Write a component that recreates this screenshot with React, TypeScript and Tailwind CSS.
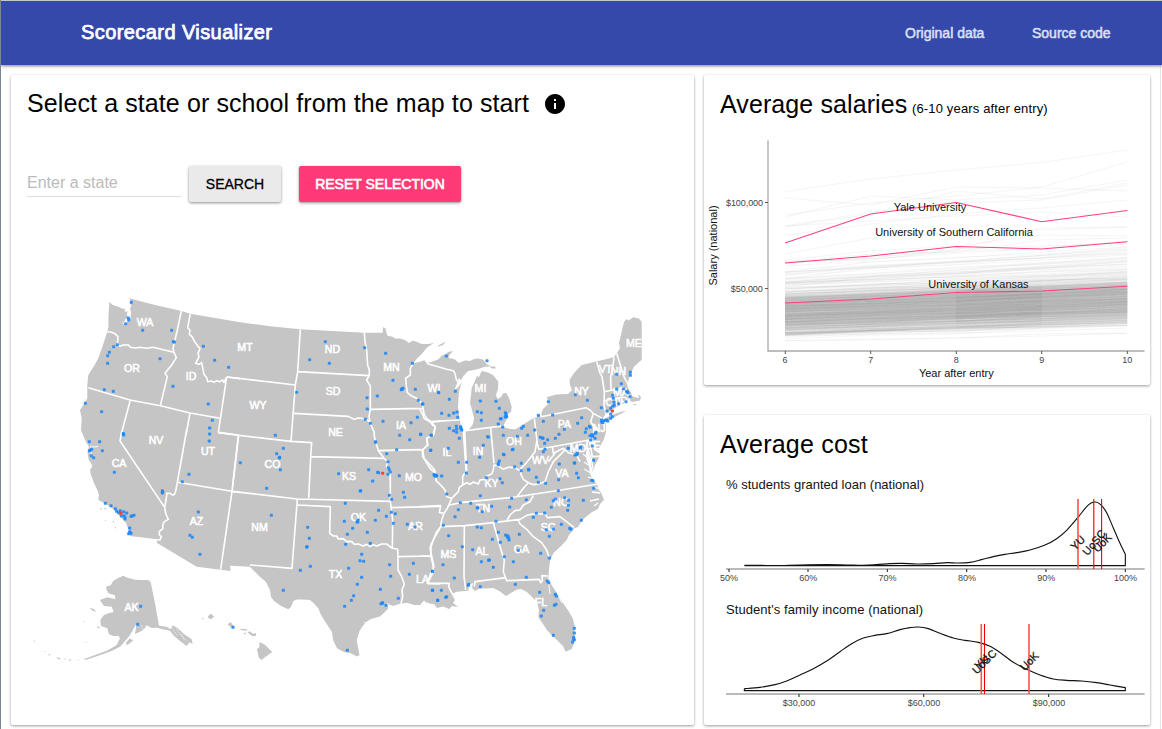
import React from "react";

type Tile = { x: number; y: number; borders: string; dots: string; red?: string };

// Map geometry is stored per tile at three times the drawing scale.
const tiles: Tile[] = [
  {
    x: 20,
    y: 285,
    borders:
      "M262,140L275,142 285,146 294,155 292,178 300,184 310,180 325,180 332,187 345,189 360,187 380,190 400,187 430,194 462,202M484,78L472,135 459,190 462,202 469,218 455,240 435,265 442,275 437,295 421,362M511,86L503,128 510,136 508,148 516,155 525,172 535,185 540,190 534,205 537,215 527,235 537,238 545,233 552,268 560,278 563,290 575,288 582,292 590,287 598,290 608,285 612,292 620,276M620,276L660,281M620,276L595,442M205,308L330,345 421,362 510,384 601,400M331,345L303,450M510,384L498,450",
    dots: "334,52;325,99;326,105;317,116;368,136;455,136;460,170;463,171;292,179;281,185;268,202;263,212;263,235;420,221;550,184;584,226;626,247;459,304;565,357;253,314;280,319;196,355;245,380;577,406;569,429;569,447;310,446",
  },
  {
    x: 20,
    y: 430,
    borders:
      "M305,5L300,33 434,232M500,0L472,157 466,188 460,196 450,190 441,190 438,210 434,232 437,250 445,268 433,275 428,285 429,295 418,305 418,315 424,320 420,330 410,330M472,157L636,184 660,187M595,7L655,15 636,184 602,418",
    dots: "310,11;311,15;208,35;239,35;208,62;211,61;215,58;247,62;214,77;221,83;283,127;568,33;507,133;487,155;427,182;427,189;428,186;256,220;273,227;286,236;290,244;301,242;311,245;320,249;296,248;304,258;312,257;315,262;315,267;333,259;336,258;342,256;329,294;329,305;326,311;333,310;330,308;535,246;510,316;517,322;540,373",
    red: "303,250",
  },
  { x: 20, y: 560, borders: "", dots: "362,139;353,193;639,202" },
  {
    x: 230,
    y: 300,
    borders:
      "M-9,231L196,255M-35,398L24,406 183,424 245,428 242,470 462,475M26,405L8,560M211,88L203,215 196,255 183,424M203,215L418,227M192,340L355,349 372,358 385,354 395,355 412,360 421,370M403,98L405,125 410,150 413,195 418,210 418,227 410,240 421,258 421,328 417,350 421,370 432,395 434,415 440,435 445,452 462,475 474,485 469,498 480,515 481,540M421,328L579,325M549,192L541,205 541,225 527,235 529,258 532,278 545,288 560,295 578,312 579,325 583,345 590,355 606,368 616,380 610,405 590,415 594,435 577,450 578,470 600,505 615,518 618,540M445,452L570,449 577,450M602,366L630,364M242,470L236,595",
    dots: "286,125;239,179;298,190;404,143;467,160;547,190;489,241;515,268;519,265;517,266;514,269;556,268;200,277;411,293;442,288;565,301;578,312;412,327;406,358;421,370;459,364;562,352;543,368;509,406;539,419;572,403;604,406;437,425;436,427;500,449;470,461;602,451;136,406;160,445;140,461;148,474;149,472;151,509;31,488;326,521;416,509;443,517;446,518;474,485;475,503;478,509;481,516;474,523;508,527;615,525;617,527;620,527;626,278",
    red: "458,520",
  },
  {
    x: 230,
    y: 470,
    borders:
      "M6,64L202,87 481,94M481,0L481,94 488,150 487,235M202,87L186,295 60,285M202,105L301,110 299,190 310,198 320,198 325,207 340,206 350,215 365,214 372,223 385,222 400,228 410,223 420,230 430,224 440,228 455,222 470,222 487,235 503,238 504,260 605,258M481,113L630,109M504,260L504,300 515,320 523,342 516,360 518,380 513,400M630,175L618,195 605,220 600,235 605,258 612,290 602,310 592,340 630,342",
    dots: "428,33;391,63;392,62;110,55;124,136;346,100;520,67;524,82;478,76;485,88;446,121;469,139;484,127;496,131;490,160;532,163;555,171;343,154;381,155;384,150;383,156;436,151;368,175;352,193;412,187;347,223;421,220;233,172;238,205;230,231;231,230;395,253;390,272;401,274;241,289;211,301;356,295;479,284;482,319;395,322;382,343;451,358;371,377;364,391;344,409;453,401;458,398;456,400;468,406;505,385;160,361;352,541;550,280;538,313;607,304;608,361;623,391",
  },
  {
    x: 420,
    y: 310,
    borders:
      "M15,150L25,162 60,172 80,178 100,182 105,190 108,205 112,215M30,335L118,330M130,363L212,352 250,348M212,352L222,460M130,363L138,480M0,299L9,315 12,325 20,330 30,335 38,345 46,350 40,375 20,385 22,405 8,420M343,325L352,400 356,418 508,390M345,322L360,308 364,320 498,293M498,293L510,300 520,310 512,335 528,360 508,385M350,395L345,425 330,445 318,460 300,478M520,310L547,325M530,155L540,190 546,200 553,245 552,285 560,320M582,142L578,175 572,200 573,240M553,245L590,238 612,232M553,272L605,262M596,262L602,285M590,130L612,200 625,225M397,410L400,430 430,415 445,428 470,435 480,455M508,390L517,440 545,438M405,430L385,455",
    dots: "79,138;201,152;56,247;106,244;88,268;65,310;87,316;101,309;111,306;113,322;88,355;109,349;110,357;101,362;122,350;124,357;122,353;125,360;110,367;118,385;181,273;172,305;184,308;184,331;228,274;238,295;256,308;258,318;258,312;260,320;256,321;241,326;244,326;235,342;248,351;85,415;32,421;33,376;2,373;8,282;203,380;205,381;190,406;179,442;115,457;140,457;250,376;292,379;323,376;277,419;279,418;250,433;252,434;238,453;235,460;235,464;284,470;304,460;326,478;305,355;310,349;344,360;355,316;370,334;398,315;385,275;466,254;502,271;544,293;361,382;367,384;369,385;383,389;406,385;417,373;433,358;374,400;375,418;370,425;473,340;485,323;496,367;499,356;508,349;511,352;510,378;518,374;518,379;526,370;528,367;525,385;514,375;512,390;517,408;545,330;548,338;545,336;550,333;556,331;563,333;560,330;572,325;577,320;572,312;572,295;578,288;583,286;561,303;578,256;580,265;582,277;596,281;590,237;611,236;622,246;620,244;624,248;604,221;590,193;631,187;631,196;618,275;630,260;445,415;465,435;472,430;470,434;482,411;481,414;463,459;418,462;521,451",
    red: "577,303",
  },
  {
    x: 420,
    y: 450,
    borders:
      "M22,400L88,400 86,410 93,425 100,435M0,170L62,167 58,188 72,190M0,318L34,318M95,145L82,175 72,190 65,210 62,230 50,245 40,270 33,290 33,320 40,350 38,370 22,400M8,0L12,25 35,50 44,60 48,75 48,92 62,105 75,120 80,140 95,145M134,-57L140,60 128,80 128,105 118,112 115,125 95,145M128,105L140,98 150,103 160,96 175,102 180,90 195,88 200,78 215,72 220,60 222,45 235,48 250,58 265,52 285,52 295,60 305,62 302,72 310,88 325,98M325,98L310,115 290,142M88,165L115,160 120,158 270,143 410,122 530,103M340,137L330,155 310,165 300,180 285,182 270,195 262,210M65,230L135,227 220,218 300,208 320,196 340,192 375,192 383,203 420,200 462,232M295,210L300,222 320,238 340,260 365,278 380,300 388,325M133,228L132,380 137,420M220,218L243,300 253,330 250,365 260,392 358,388 362,398 367,392 366,377 383,378M163,410L165,395 258,383M325,98L340,104 355,102 375,95 380,80 385,65 400,35 425,10 435,0",
    dots: "139,69;65,78;42,74;44,76;48,76;47,79;80,132;121,158;115,179;105,200;70,226;86,257;152,160;181,137;199,83;240,86;247,98;275,145;319,149;269,171;215,169;187,185;172,174;174,173;228,214;172,231;184,233;235,247;217,268;241,277;257,255;264,258;262,261;266,264;267,270;298,253;295,301;280,335;253,320;206,331;208,330;184,335;158,299;127,290;220,352;69,344;103,384;37,364;37,421;64,421;77,442;80,440;53,451;145,406;146,403;181,410;286,403;319,382;382,393;386,398;359,427;362,310;388,324;406,433;409,438;403,466;408,463;371,481;364,498;400,556;463,535;463,549;461,562;463,569;461,568;458,576;388,259;424,223;449,235;453,238;401,238;379,239;340,202;349,190;374,189;394,172;400,152;406,147;434,143;446,151;445,166;443,181;490,151;484,211;521,115;515,91;519,92;475,83;470,70;464,39;416,89;377,100;349,82;355,97;304,62;326,60;415,122",
  },
];

const labels: [string, number, number][] = [
  ["WA", 145, 322], ["OR", 132, 368], ["ID", 191, 376], ["MT", 245, 347], ["WY", 258, 405],
  ["ND", 332.5, 349], ["SD", 333, 391], ["NE", 335.5, 432], ["KS", 349, 476], ["MN", 391.5, 367],
  ["IA", 401, 425], ["WI", 434, 388], ["MI", 480.5, 388], ["IL", 447, 452.5], ["IN", 478, 451],
  ["OH", 514, 441], ["PA", 564.5, 424], ["NY", 581.5, 391], ["VT", 605.5, 369], ["NH", 618.5, 371.5],
  ["ME", 634, 343], ["MA", 621, 392], ["CT", 612.5, 402.5], ["RI", 625.5, 401], ["NJ", 599, 428],
  ["DE", 593, 445], ["MD", 578, 448.5], ["VA", 562, 473], ["WV", 540.5, 460], ["KY", 491.5, 483],
  ["TN", 483, 508], ["NC", 561, 502], ["SC", 548, 527], ["GA", 521.5, 549], ["AL", 482, 551],
  ["MS", 448.5, 554], ["LA", 422.5, 579], ["AR", 415.5, 526], ["MO", 413.5, 477], ["OK", 358.5, 517],
  ["TX", 335.5, 574], ["NM", 259.5, 527], ["AZ", 196.5, 521], ["UT", 208, 451], ["CO", 272.5, 464],
  ["NV", 156, 440], ["CA", 119, 463], ["FL", 541, 602], ["AK", 131.5, 607],
];

const mainland =
  "M109.3,301.7L112,304.5 115,305.7 119,307 122,308.5 125.3,309 124.5,312 127.5,311 127,315 128,317 125,319.5 124,323 121,322 125,325 128,321 130.5,318 131,312 130,309 131.5,305 129.5,304 130.5,301 129.3,298.3 155,305 181.3,311 190.3,313.7 240,322.3 270,326.2 300.3,329.3 364.3,332.7 382.7,332.7 383,327.3 385.3,328 386.5,333 387.7,336 392,336.5 395,338.5 400,338.5 405,340 409,343 413,340.5 417,342 421.7,344 428,344 434,343 427,347.5 421.7,354 417,358.5 413.3,363.3 420,361.7 425,360 427,363 431,362 438,359.5 442,355.5 446,354 448,352 453,351 449.5,355 448.5,358 454,359 459,363 465,360.5 470,361 474,359 478,358.5 483,359.5 487,364.5 491,366 484,367 478,369 472,370.5 468,371 463.5,376 461,380 459,378 456,386 454.5,389.5 457.5,388 462,382.5 459.3,390 458.5,398 458,407 459.3,418 461,426 463.3,431 467,431 470,428.3 473,424 474,418 472,410 470,403 471,395 471.7,388 474,383 477,376 479,377 481.7,371 488,372.5 493,375 498.3,381.7 498,389 496,395 497.5,399 501,397 503,393.5 506,392.7 509,398 511.7,406.7 511,412 508,414 507.3,418.3 502.7,426.7 508,428.5 515,429.5 524,424 533.3,418.3 541,414 543,409 549,403 546.7,397.3 556,394.5 568,394 572,390 570,385 569.5,380 574,373 581.7,365 590,363 614,357.3 616.7,353.3 620,348.3 619,343 621.7,331.7 624,322 626.5,319 628.5,320.5 633.3,317.3 639,318.5 641.7,322 641.7,360 639,362 636,365 634,366.5 632,371 629.3,376.7 627.3,385 628,388 631,392.5 632,396 636,397.5 639,398 638,394 641,397 640,400.5 632,402 628,399.5 625,403 620,405 611.7,410 605,415 602,419 602,424 606,423 606,431.7 604,439 601.7,443.3 598,450 594,444 592.5,437 592,446 594,450 600,454 598.3,459 594.5,466 593.5,475 591.5,467 591.5,461 589,455 587,447 586,453 586.5,460 589,466 590,474 592.5,479 597,484 598.5,489 601.7,494 604,500 600,504 598,509 592,512 587,516 581.7,520.7 578,527 574.3,528.3 569,535 566.7,540 561,546 553.3,553.3 550,561 549.3,567 548.3,576.7 551,584 556.7,593 563,603 568.5,611 573,619 574.8,627 574.5,636 573.8,644 571.7,649 565.7,651.7 563,646 557,640 552,635.5 547,630 543,624 538.3,617 539,610 537,602 532,597 526.7,591.7 521,589 517,589.5 506,596 500,591.5 493.3,588 486,588.5 480,588.3 475,591 472,588 473,583 469,584.5 468.3,590.7 456.7,591.7 451.7,594 455,600 453,603 458.3,607 452,606 449,609 443.3,606.5 437,608 434,604 426.7,603.3 424,600.5 420,605 414,605 408,603 401.7,603.3 393,606 388,604 388,609 380,616.5 371,619 366,622 362,627 359.5,631 356.7,640 358.3,649 359.5,655 357,656.5 350,653 344,652 337,648.3 333,640 332,632 326,623 321,615 318.3,608.3 314,603.5 310,600 302,599.5 297,599.5 293.3,601 291,607 288.3,609.3 281,606 274,601 271,597 270,590 266,582 259,576 250,566.7 230,565.7 230.7,571 196.7,566.7 156.7,542.7 157.3,539.3 130,536 129,531 126,523 120,516 113,509 106,504 98.3,500 99,495 97.3,490 94,483 91,475 90,470 92.5,466 88.5,459 87.5,453 89,447 85.5,441 81,430 81.7,418.3 80,410 84,404 87.3,398.3 87.3,385 88.3,375 94,366 98.3,358.3 103,345 107.3,331.7 108.5,327 108.3,320Z";

const alaska =
  "M258,80L272,76 280,62 295,54 310,47 322,53 345,59 365,60 385,60 392,66 405,130 417,197 440,200 452,208 458,196 475,206 492,222 515,238 518,252 508,247 500,258 480,243 462,228 450,212 425,207 412,203 395,204 380,196 372,208 360,215 345,222 350,190 340,208 330,225 318,240 300,260 275,273 250,282 215,294 195,300 192,297 240,280 265,270 290,255 300,235 296,228 280,228 266,222 262,205 243,198 241,180 252,165 270,158 281,157 275,140 252,138 245,128 240,120 262,112 286,118 285,106 265,100 260,90Z";

const islands =
  "M208,143L222,147 228,155 218,152ZM230,199L240,201 235,206ZM318,248L328,236 340,240 330,250 320,256ZM40,241l6,2 -1,4zM72,273l5,1 -2,2zM84,282l8,2 -4,3zM108,291l14,4 -4,4zM130,296l6,0 0,4zM145,298l10,1 -4,4zM172,299l6,1 -3,2zM190,184l4,0 -2,4zM197,245l4,1 -3,3zM545,176l7,-3 -3,6zM564,168L574,161 582,170 573,178 565,174ZM623,193L632,186 638,195 645,202 634,203ZM660,206L682,208 680,212 662,210ZM670,218L678,218 676,224ZM682,217L690,214 698,221 707,219 709,227 697,229ZM718,246L735,254 748,268 757,276 740,288 724,300 716,292 711,268 718,262Z";

const coastSpecks =
  "M240,235l6,3M252,236l7,1M255,270l3,2M278,273l5,5M285,290l3,5";

const dot = (s: string) =>
  s.split(";").map((p) => {
    const [cx, cy] = p.split(",").map(Number);
    return <rect key={p} x={cx - 4.6} y={cy - 4.6} width="9.2" height="9.2" rx="2.6" />;
  });

function UsMap() {
  return (
    <svg className="block h-[400px] w-[631px] [font-family:'Liberation_Sans',sans-serif]" viewBox="11 285 631 400">
      <path d={mainland} fill="#c5c5c5" />
      <path d="M602,421L610,415.5 622,411.5 626,411 612,418.5 602,423ZM438,345.5L446,341.5 443,345 438.5,346.5ZM489,366.5l6,0 1,2 -4,0ZM633,404l4,0 -2,1.5Z" fill="#c5c5c5" />
      <g transform="translate(20 560) scale(.33333)" fill="#c5c5c5">
        <path d={alaska} />
        <path d={islands} />
        <path d="M455,203l18,25M470,208l22,30M484,222l15,22M365,196l4,12M376,198l6,6" stroke="#fff" strokeWidth="2" strokeDasharray="5 3" />
      </g>
      <g transform="translate(20 430) scale(.33333)" fill="none">
        <path d={coastSpecks} stroke="#c9c9c9" strokeWidth="3" />
        <path d="M211,48l4,10 -2,14 5,8M215,50l9,1 10,-2" stroke="#fff" strokeWidth="3" />
      </g>
      <g fill="none" stroke="#fff" strokeWidth="1.3">
        <path d="M586,443L588,449 590,455 592,461 593,469 594,477M583,454L588,458M584,462L590,466M584,469L591,473M588,477L595,479M594,487L600,489M592,492L600,493M590,501L599,499M594,506L598,503" />
        <path d="M471,586L470,591M548,577L549,586 550,594M559,597L562,603M364,622L368,626M387,603L389,608M427,602L431,607" strokeWidth="1" />
      </g>
      {tiles.map((t) => (
        <path key={`${t.x}-${t.y}`} transform={`translate(${t.x} ${t.y}) scale(.33333)`} d={t.borders} fill="none" stroke="#fff" strokeWidth="4.8" strokeLinejoin="round" />
      ))}
      <g fill="#fff" fontSize="10.6" textAnchor="middle" stroke="#fff" strokeWidth=".55">
        {labels.map(([name, x, y]) => (
          <text key={name} x={x} y={y + 3.8}>{name}</text>
        ))}
      </g>
      {tiles.map((t) => (
        <g key={`${t.x}-${t.y}`} transform={`translate(${t.x} ${t.y}) scale(.33333)`}>
          <g fill="#1e88f5" fillOpacity=".88">{dot(t.dots)}</g>
          {t.red && <g fill="#f44336">{dot(t.red)}</g>}
        </g>
      ))}
    </svg>
  );
}

function seeded(seed: number) {
  let s = seed;
  return () => {
    s = (s * 1664525 + 1013904223) % 4294967296;
    return s / 4294967296;
  };
}

const years = [785, 870.7, 956.3, 1041.7, 1127.3];

function schoolLines() {
  const rnd = seeded(42);
  const out: string[] = [];
  for (let i = 0; i < 900; i++) {
    const g = (rnd() + rnd() + rnd() + rnd() - 2) * 1.35;
    const tail = rnd() < 0.22 ? rnd() * rnd() * 44 : 0;
    const base = Math.min(314 + g * 14 - tail, 333 + rnd() * 3);
    const rise = 8 + rnd() * 9 + tail * 0.25;
    out.push(
      years
        .map((x, k) => `${x},${(base - (rise * k) / 4 + (rnd() - 0.5) * 3 * (k ? 1 : 0)).toFixed(1)}`)
        .join(" "),
    );
  }
  return out;
}

const outliers = [
  [191.5, 179, 170, 162.5, 150], [198, 205, 187, 188, 191], [215, 203, 196, 187, 162],
  [217, 196, 200, 195, 180], [226, 212, 203, 200, 185], [227, 214, 191, 199, 183],
  [235, 224, 214, 208, 200], [226, 221, 216, 212, 217], [254, 238, 232, 230, 227],
  [260, 251, 246, 235, 236], [262, 254, 252, 240, 238], [263, 258, 249, 246, 243],
  [261, 260, 250, 228, 227], [272, 262, 258, 252, 247], [275, 266, 262, 258, 251],
  [279, 268, 265, 260, 255], [282, 276, 270, 263, 258], [287, 277, 274, 266, 261],
  [340.5, 339, 338, 336, 333], [341, 340, 338, 334, 333.5], [339, 335, 334, 328, 326],
  [337, 334, 333, 331, 328], [334, 331, 332, 325.5, 322], [333, 330.5, 331, 325, 323],
];

const salaryRows = schoolLines();

const highlights: [string, number, number, number[]][] = [
  ["Yale University", 930, 211, [243, 214, 202.5, 221.7, 210.5]],
  ["University of Southern California", 954, 236, [263, 256, 246.5, 249, 241.8]],
  ["University of Kansas", 978.5, 288, [303, 299, 292.5, 291, 286.3]],
];

const toPoints = (ys: number[]) => ys.map((y, k) => `${years[k]},${y}`).join(" ");

function SalaryChart() {
  return (
    <svg className="block h-[252px] w-[446px] [font-family:'Liberation_Sans',sans-serif]" viewBox="704 130 446 252">
      <g fill="none" stroke="#aaa" strokeOpacity=".07" strokeWidth="1">
        {salaryRows.map((p, i) => <polyline key={i} points={p} />)}
      </g>
      <g fill="none" stroke="#777" strokeOpacity=".07" strokeWidth="1">
        {outliers.map((p, i) => <polyline key={i} points={toPoints(p)} />)}
      </g>
      <path d="M768,140.5V351H1144.5" fill="none" stroke="#a8a8a8" strokeWidth="1.3" />
      <path d="M765,202.5h3M765,288.5h3M785.3,351v3M870.7,351v3M956.3,351v3M1041.7,351v3M1127.3,351v3" stroke="#555" />
      <g fill="none" stroke="#ff4081" strokeWidth="1.1">
        {highlights.map(([n, , , ys]) => (
          <polyline key={n} points={toPoints(ys)} />
        ))}
      </g>
      <g fontSize="11" fill="#111" textAnchor="middle">
        {highlights.map(([n, x, y]) => <text key={n} x={x} y={y}>{n}</text>)}
        <text x="956.3" y="377">Year after entry</text>
        <text transform="translate(717 245.5) rotate(-90)">Salary (national)</text>
      </g>
      <g fontSize="9" fill="#444" textAnchor="middle">
        <text x="744.5" y="206" textLength="37">$100,000</text>
        <text x="746.8" y="292" textLength="32">$50,000</text>
        {years.map((x, i) => <text key={x} x={x} y="363">{i + 6}</text>)}
      </g>
    </svg>
  );
}

function smooth(raw: string) {
  const p = raw.split(" ").map((q) => q.split(",").map(Number));
  let d = `M${p[0]}`;
  for (let i = 0; i < p.length - 1; i++) {
    const a = p[Math.max(i - 1, 0)], b = p[i], c = p[i + 1], e = p[Math.min(i + 2, p.length - 1)];
    d += `C${b[0] + (c[0] - a[0]) / 6},${b[1] + (c[1] - a[1]) / 6} ${c[0] - (e[0] - b[0]) / 6},${c[1] - (e[1] - b[1]) / 6} ${c[0]},${c[1]}`;
  }
  return d;
}

const loanCurve = smooth("133,466 180,466 230,467 300,465 380,464 440,465 490,466 530,464 570,461 605,460 650,462 700,461 740,458 775,459 810,457 845,449 880,440 915,433 950,428 990,420 1035,405 1070,386 1100,361 1134,322 1158,292 1172,280 1187,276 1202,284 1220,308 1240,354 1260,400 1276,433");
const incomeCurve = smooth("133,836 180,832 225,824 260,813 300,795 340,776 385,750 420,725 455,701 490,684 525,676 560,671 600,659 630,653 655,651 685,656 720,670 760,684 795,691 835,697 870,709 905,731 940,757 985,780 1020,795 1060,807 1100,811 1145,813 1190,818 1230,825 1276,833");

function CostCharts() {
  return (
    <svg className="block h-[240px] w-[446px] [font-family:'Liberation_Sans',sans-serif]" viewBox="704 475 446 240">
      <text x="726" y="489" fontSize="13" textLength="198" fill="#111">% students granted loan (national)</text>
      <text x="726" y="614" fontSize="13" textLength="197" fill="#111">Student's family income (national)</text>
      <g transform="translate(700 410) scale(.33333)" fill="none" stroke="#111" strokeWidth="3.4">
        <path d={`${loanCurve}V467H133`} strokeLinejoin="round" />
        <path d={`${incomeCurve}V842H133V836`} strokeLinejoin="round" />
        <path d="M78,477H1334M78,852H1334" stroke="#777" />
        <path d="M87,477v9M324,477v9M562,477v9M800,477v9M1038,477v9M1276,477v9M297,852v9M671,852v9M1046,852v9" stroke="#333" />
      </g>
      <g stroke="#f33">
        <path d="M1078,499V569M981.3,624V694M1029,624V694" stroke="#ff5050" strokeWidth="1.6" />
        <path d="M1093.8,499V569M1101.6,499V569M984.5,624V694" stroke="#f00000" strokeWidth="1.1" />
      </g>
      <g fontSize="9" fill="#444" textAnchor="middle">
        {["50%", "60%", "70%", "80%", "90%", "100%"].map((t, i) => (
          <text key={t} x={729 + i * 79.3} y="581">{t}</text>
        ))}
        <text x="799" y="706">$30,000</text>
        <text x="924" y="706">$60,000</text>
        <text x="1049" y="706">$90,000</text>
      </g>
      <g fontSize="11" fill="#111" stroke="#111" strokeWidth=".25" textAnchor="middle">
        <text transform="translate(1080.5 545.5) rotate(-45)">YU</text>
        <text transform="translate(1097 545) rotate(-50)">UoSC</text>
        <text transform="translate(1105 545.5) rotate(-45)">UoK</text>
        <text transform="translate(984.5 664.5) rotate(-45)">YU</text>
        <text transform="translate(987 664.5) rotate(-45)">UoSC</text>
        <text transform="translate(1032 664) rotate(-45)">UoK</text>
      </g>
    </svg>
  );
}

export default function App() {
  return (
    <div className="flex h-[729px] w-[1162px] flex-col overflow-hidden border-l border-[#7c8694] bg-white text-black [font-family:'Liberation_Sans',Arial,sans-serif]">
      <header className="relative flex h-[65px] shrink-0 items-center justify-between border-t border-[#c3c6cf] bg-[#3549ab] pr-[51px] pl-20 shadow-[0_1px_3px_rgba(0,0,0,0.5)]">
        <h1 className="pb-0.5 text-[20px] font-normal tracking-[0.42px] text-white [-webkit-text-stroke:0.75px_white]">Scorecard Visualizer</h1>
        <nav className="flex gap-12 text-[14px] text-[#dde0f2] [-webkit-text-stroke:0.5px_#dde0f2]">
          <a className="w-[79px] whitespace-nowrap">Original data</a>
          <a className="w-[79px] whitespace-nowrap">Source code</a>
        </nav>
      </header>
      <main className="mr-px flex grow gap-[10px] border-r border-[#e4e4e4] pt-[10px] pl-[10px]">
        <section className="flex h-[650px] w-[683px] flex-col rounded-[2px] bg-white shadow-[0_1px_3px_rgba(0,0,0,0.4)]">
          <div className="flex h-14 items-center pl-4">
            <h2 className="w-[516px] text-[25px] leading-8 tracking-[0.1px] whitespace-nowrap">Select a state or school from the map to start</h2>
            <svg className="mt-0.5 size-[24px]" viewBox="0 0 24 24">
              <path d="M12 2C6.48 2 2 6.48 2 12s4.48 10 10 10 10-4.48 10-10S17.52 2 12 2zm1 15h-2v-6h2v6zm0-8h-2V7h2v2z" />
            </svg>
          </div>
          <div className="mt-[35px] flex h-[36px] items-start pl-4">
            <input className="mr-2 h-[31px] w-[154px] border-b border-[#dcdcdc] pt-[3px] text-[16px] outline-none placeholder:text-[#bbb]" placeholder="Enter a state" />
            <button className="h-[36px] w-[92px] rounded-[2px] bg-[#eaeaea] text-[14px] whitespace-nowrap shadow-[0_1px_3px_rgba(0,0,0,0.45)] [-webkit-text-stroke:0.3px_black]">SEARCH</button>
            <button className="ml-[18px] h-[36px] w-[162px] rounded-[2px] bg-[#ff3a77] text-[14px] whitespace-nowrap text-white shadow-[0_1px_3px_rgba(0,0,0,0.45)] [-webkit-text-stroke:0.6px_white]">RESET SELECTION</button>
          </div>
          <div className="mt-[83px]"><UsMap /></div>
        </section>
        <div className="flex flex-col gap-[30px]">
          <section className="flex h-[310px] w-[446px] flex-col rounded-[2px] bg-white shadow-[0_1px_3px_rgba(0,0,0,0.4)]">
            <div className="flex h-[55px] items-baseline pt-[13px] pl-4">
              <h2 className="w-[192px] text-[25px] leading-8 tracking-[0.1px] whitespace-nowrap">Average salaries</h2>
              <span className="text-[13px] tracking-[0.15px] whitespace-nowrap">(6-10 years after entry)</span>
            </div>
            <SalaryChart />
          </section>
          <section className="flex h-[310px] w-[446px] flex-col rounded-[2px] bg-white shadow-[0_1px_3px_rgba(0,0,0,0.4)]">
            <h2 className="h-[60px] pt-[13px] pl-4 text-[25px] leading-8 tracking-[0.2px] whitespace-nowrap">Average cost</h2>
            <CostCharts />
          </section>
        </div>
      </main>
    </div>
  );
}
